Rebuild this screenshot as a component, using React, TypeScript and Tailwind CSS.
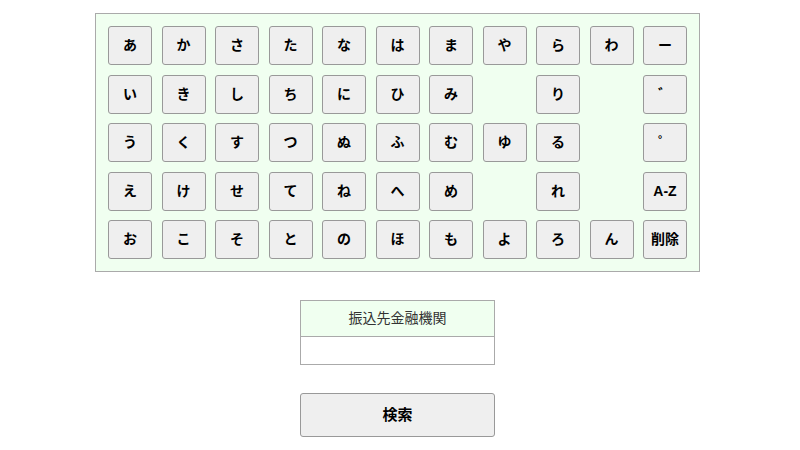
const rows = [
  ["あ", "か", "さ", "た", "な", "は", "ま", "や", "ら", "わ", "ー"],
  ["い", "き", "し", "ち", "に", "ひ", "み", "", "り", "", "゛"],
  ["う", "く", "す", "つ", "ぬ", "ふ", "む", "ゆ", "る", "", "゜"],
  ["え", "け", "せ", "て", "ね", "へ", "め", "", "れ", "", "A-Z"],
  ["お", "こ", "そ", "と", "の", "ほ", "も", "よ", "ろ", "ん", "削除"],
];

export default function App() {
  return (
    <main
      className="flex min-h-[450px] flex-col items-center bg-white pr-[5px] pt-[13px] text-black"
      style={{ fontFamily: '"Liberation Sans", "Noto Sans CJK JP", sans-serif' }}
    >
      <div className="grid grid-cols-[repeat(11,44px)] gap-[9.5px] border border-[#aaaaaa] bg-[#f0fff0] p-[12px]">
        {rows.flat().map((key, i) =>
          key ? (
            <button
              key={i}
              className="flex h-[39px] w-[44px] items-center justify-center rounded-[3px] border border-[#999999] bg-[#efefef] text-[14px] font-bold"
            >
              {key}
            </button>
          ) : (
            <div key={i} className="h-[39px] w-[44px]" />
          )
        )}
      </div>

      <div className="mt-[28px] w-[195px] border border-[#aaaaaa]">
        <div className="flex h-[36px] items-center justify-center border-b border-[#aaaaaa] bg-[#f0fff0] text-[14px] text-[#333333]">
          振込先金融機関
        </div>
        <div className="h-[27px] bg-white" />
      </div>

      <button className="mt-[28px] flex h-[44px] w-[195px] items-center justify-center rounded-[3px] border border-[#999999] bg-[#efefef] text-[15px] font-bold">
        検索
      </button>
    </main>
  );
}
